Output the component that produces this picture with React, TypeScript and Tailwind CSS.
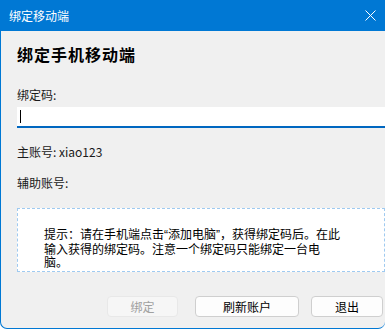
import React from 'react'

const font = { fontFamily: '"Noto Sans CJK SC", "Microsoft YaHei", sans-serif' }

const App = () => {
  return (
    <div className="w-[385px] h-[329px] bg-white" style={font}>
      <div className="w-[385px] h-[329px] flex flex-col bg-[#f0f0f0] border-l border-b border-[#0078d4] rounded-bl-[7px] rounded-br-[7px] overflow-hidden">

        {/* Title bar */}
        <div className="h-[31px] shrink-0 bg-[#0078d4] flex items-center justify-between pl-[9px] pr-[9px] -ml-px">
          <span className="text-white text-[12px] leading-none">绑定移动端</span>
          <svg width="11" height="11" viewBox="0 0 11 11">
            <path d="M0.5 0.5 L10.5 10.5 M10.5 0.5 L0.5 10.5" stroke="white" strokeWidth="1" />
          </svg>
        </div>

        {/* Body */}
        <div className="flex flex-col pl-[16px] pt-[12px] text-[#1a1a1a]">
          <div className="text-[16px] leading-[22px] font-bold tracking-[1px] text-black">绑定手机移动端</div>

          <div className="mt-[22px] text-[12px] leading-[16px]">绑定码:</div>

          <div className="mt-[4px] h-[21px] bg-white border-b-2 border-[#0067c0] flex items-center pl-[3px]">
            <div className="w-px h-[13px] bg-black" />
          </div>

          <div className="mt-[16px] text-[12px] leading-[16px]">主账号: xiao123</div>

          <div className="mt-[15px] text-[12px] leading-[16px]">辅助账号:</div>

          {/* Hint box */}
          <div className="mt-[17px] h-[64px] bg-white border border-dashed border-[#9fcaf0] pl-[26px] pt-[18px]">
            <p className="text-[12px] leading-[13px] text-black whitespace-nowrap">
              提示：请在手机端点击<span style={{ fontFamily: '"Liberation Sans", sans-serif' }}>“</span>添加电脑<span style={{ fontFamily: '"Liberation Sans", sans-serif' }}>”</span>，获得绑定码后。在此<br />
              输入获得的绑定码。注意一个绑定码只能绑定一台电<br />
              脑。
            </p>
          </div>

          {/* Buttons */}
          <div className="mt-[24px] flex items-center pl-[90px] text-[12px]">
            <button className="w-[71px] h-[21px] rounded-[4px] border border-[#e8e8e8] bg-[#f6f6f6] text-[#a0a0a0]" disabled>
              绑定
            </button>
            <button className="ml-[17px] w-[104px] h-[21px] rounded-[4px] border border-[#cfcfcf] bg-[#fdfdfd] text-black">
              刷新账户
            </button>
            <button className="ml-[12px] w-[72px] h-[21px] rounded-[4px] border border-[#cfcfcf] bg-[#fdfdfd] text-black">
              退出
            </button>
          </div>
        </div>
      </div>
    </div>
  )
}

export default App
